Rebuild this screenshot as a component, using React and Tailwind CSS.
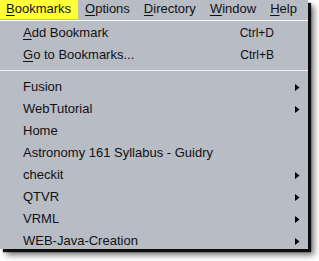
import React from "react";

const menuBar = [
  { label: "Bookmarks", key: "B", rest: "ookmarks", active: true },
  { label: "Options", key: "O", rest: "ptions" },
  { label: "Directory", key: "D", rest: "irectory" },
  { label: "Window", key: "W", rest: "indow" },
  { label: "Help", key: "H", rest: "elp" },
];

const bookmarks = [
  { label: "Fusion", sub: true },
  { label: "WebTutorial", sub: true },
  { label: "Home" },
  { label: "Astronomy 161 Syllabus - Guidry" },
  { label: "checkit", sub: true },
  { label: "QTVR", sub: true },
  { label: "VRML", sub: true },
  { label: "WEB-Java-Creation", sub: true },
];

function Arrow() {
  return (
    <svg width="5" height="7" viewBox="0 0 5 7" className="block">
      <polygon points="0,0 4.5,3.5 0,7" fill="#000" />
    </svg>
  );
}

function Mnemonic({ k, rest }) {
  return (
    <>
      <span className="underline underline-offset-[2px] decoration-1">{k}</span>
      {rest}
    </>
  );
}

export default function App() {
  return (
    <div className="min-h-screen bg-white">
      <div className="w-[308px] h-[249px] overflow-hidden bg-[#b8bcc5] text-[13px] text-[#111] font-['Liberation_Sans',Arial,sans-serif] shadow-[3px_3px_1px_rgba(0,0,0,0.9),6px_6px_6px_rgba(0,0,0,0.55)]">
        {/* ─── menu bar ─── */}
        <div className="flex h-[20px]">
          {menuBar.map((m) => (
            <div
              key={m.label}
              className={
                m.active
                  ? "h-[19px] pl-[6px] pr-[7px] leading-[18px] bg-[#ffff3a]"
                  : "h-[19px] px-[7px] leading-[18px]"
              }
            >
              <Mnemonic k={m.key} rest={m.rest} />
            </div>
          ))}
        </div>
        <div className="h-px bg-white" />

        {/* ─── dropdown ─── */}
        <div className="pt-px">
          <div className="flex h-[22px] items-center justify-between pl-[23px] pr-[34px]">
            <span>
              <Mnemonic k="A" rest="dd Bookmark" />
            </span>
            <span className="text-[12px]">Ctrl+D</span>
          </div>
          <div className="flex h-[22px] items-center justify-between pl-[23px] pr-[34px]">
            <span>
              <Mnemonic k="G" rest="o to Bookmarks..." />
            </span>
            <span className="text-[12px]">Ctrl+B</span>
          </div>

          <div className="pt-[4px] pb-[5px]">
            <div className="h-px bg-[#eef0f2]" />
          </div>

          {bookmarks.map((b) => (
            <div
              key={b.label}
              className="flex h-[22px] items-center justify-between pl-[23px] pr-[8px]"
            >
              <span>{b.label}</span>
              {b.sub && <Arrow />}
            </div>
          ))}
        </div>
      </div>
    </div>
  );
}
